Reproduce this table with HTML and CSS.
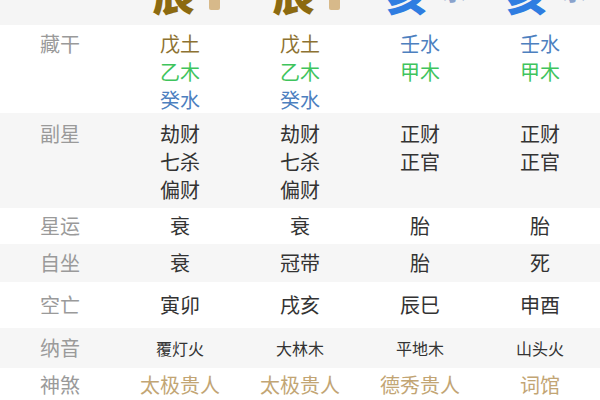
FILE: index.html
```html
<!DOCTYPE html>
<html>
<head>
<meta charset="utf-8">
<link rel="stylesheet" href="styles.css">
</head>
<body>
<div class="table">
  <div class="row head">
    <div class="cell"></div>
    <div class="cell"><span class="big earth">辰</span><span class="badge earth-badge">土</span></div>
    <div class="cell"><span class="big earth">辰</span><span class="badge earth-badge">土</span></div>
    <div class="cell"><span class="big water">亥</span><span class="sup water-sup">水</span></div>
    <div class="cell"><span class="big water">亥</span><span class="sup water-sup">水</span></div>
  </div>
  <div class="row white r-cang">
    <div class="cell label">藏干</div>
    <div class="cell"><span class="earth-t">戊土</span><span class="wood">乙木</span><span class="water-t">癸水</span></div>
    <div class="cell"><span class="earth-t">戊土</span><span class="wood">乙木</span><span class="water-t">癸水</span></div>
    <div class="cell"><span class="water-t">壬水</span><span class="wood">甲木</span></div>
    <div class="cell"><span class="water-t">壬水</span><span class="wood">甲木</span></div>
  </div>
  <div class="row gray r-fu">
    <div class="cell label">副星</div>
    <div class="cell"><span>劫财</span><span>七杀</span><span>偏财</span></div>
    <div class="cell"><span>劫财</span><span>七杀</span><span>偏财</span></div>
    <div class="cell"><span>正财</span><span>正官</span></div>
    <div class="cell"><span>正财</span><span>正官</span></div>
  </div>
  <div class="row white r-xing">
    <div class="cell label">星运</div>
    <div class="cell">衰</div>
    <div class="cell">衰</div>
    <div class="cell">胎</div>
    <div class="cell">胎</div>
  </div>
  <div class="row gray r-zi">
    <div class="cell label">自坐</div>
    <div class="cell">衰</div>
    <div class="cell">冠带</div>
    <div class="cell">胎</div>
    <div class="cell">死</div>
  </div>
  <div class="row white r-kong">
    <div class="cell label">空亡</div>
    <div class="cell">寅卯</div>
    <div class="cell">戌亥</div>
    <div class="cell">辰巳</div>
    <div class="cell">申酉</div>
  </div>
  <div class="row gray r-na">
    <div class="cell label">纳音</div>
    <div class="cell small">覆灯火</div>
    <div class="cell small">大林木</div>
    <div class="cell small">平地木</div>
    <div class="cell small">山头火</div>
  </div>
  <div class="row white r-shen">
    <div class="cell label">神煞</div>
    <div class="cell gold">太极贵人</div>
    <div class="cell gold">太极贵人</div>
    <div class="cell gold">德秀贵人</div>
    <div class="cell gold">词馆</div>
  </div>
</div>
</body>
</html>
```

FILE: styles.css
```css
html, body {
  margin: 0;
  padding: 0;
  background: #ffffff;
  overflow: hidden;
}
body {
  font-family: "Noto Sans CJK SC", "Noto Sans", sans-serif;
  color: #333333;
  width: 600px;
  height: 400px;
}
.table {
  display: flex;
  flex-direction: column;
  margin-top: -40px;
}
.row {
  display: grid;
  grid-template-columns: repeat(5, 120px);
}
.white { background: #ffffff; }
.gray { background: #f6f6f6; }
.cell {
  display: flex;
  flex-direction: column;
  align-items: center;
  font-size: 20px;
  line-height: 28px;
}
.label { color: #9a9a9a; }

.head {
  background: #f5f5f5;
  height: 65px;
}
.head .cell {
  flex-direction: row;
  align-items: flex-start;
  justify-content: center;
  padding-top: 8px;
  padding-left: 12px;
}
.big {
  font-size: 42px;
  line-height: 50px;
  font-weight: 900;
}
.earth { color: #8c6a10; }
.water { color: #2f7de1; }
.badge {
  margin-left: 14px;
  margin-top: 18px;
  width: 11px;
  height: 24px;
  border-radius: 2px;
  background: #d7b98a;
  color: transparent;
  font-size: 10px;
}
.sup {
  margin-left: 14px;
  margin-top: 3px;
  font-size: 24px;
  line-height: 38px;
  font-weight: 700;
}
.water-sup { color: #8aa3cc; }

.earth-t { color: #8d7232; }
.wood { color: #3fc45d; }
.water-t { color: #4d80bf; }
.gold { color: #c2a574; }

.r-cang { height: 88px; }
.r-cang .cell { padding-top: 5px; }
.r-fu { height: 95px; }
.r-fu .cell { padding-top: 7px; }
.r-xing { height: 36px; }
.r-xing .cell { padding-top: 4px; }
.r-zi { height: 38px; }
.r-zi .cell { padding-top: 5px; }
.r-kong { height: 46px; }
.r-kong .cell { padding-top: 9px; }
.r-na { height: 40px; }
.r-na .cell { padding-top: 6px; }
.r-na .cell.small { font-size: 16px; }
.r-shen { height: 40px; }
.r-shen .cell { padding-top: 3px; }
```
